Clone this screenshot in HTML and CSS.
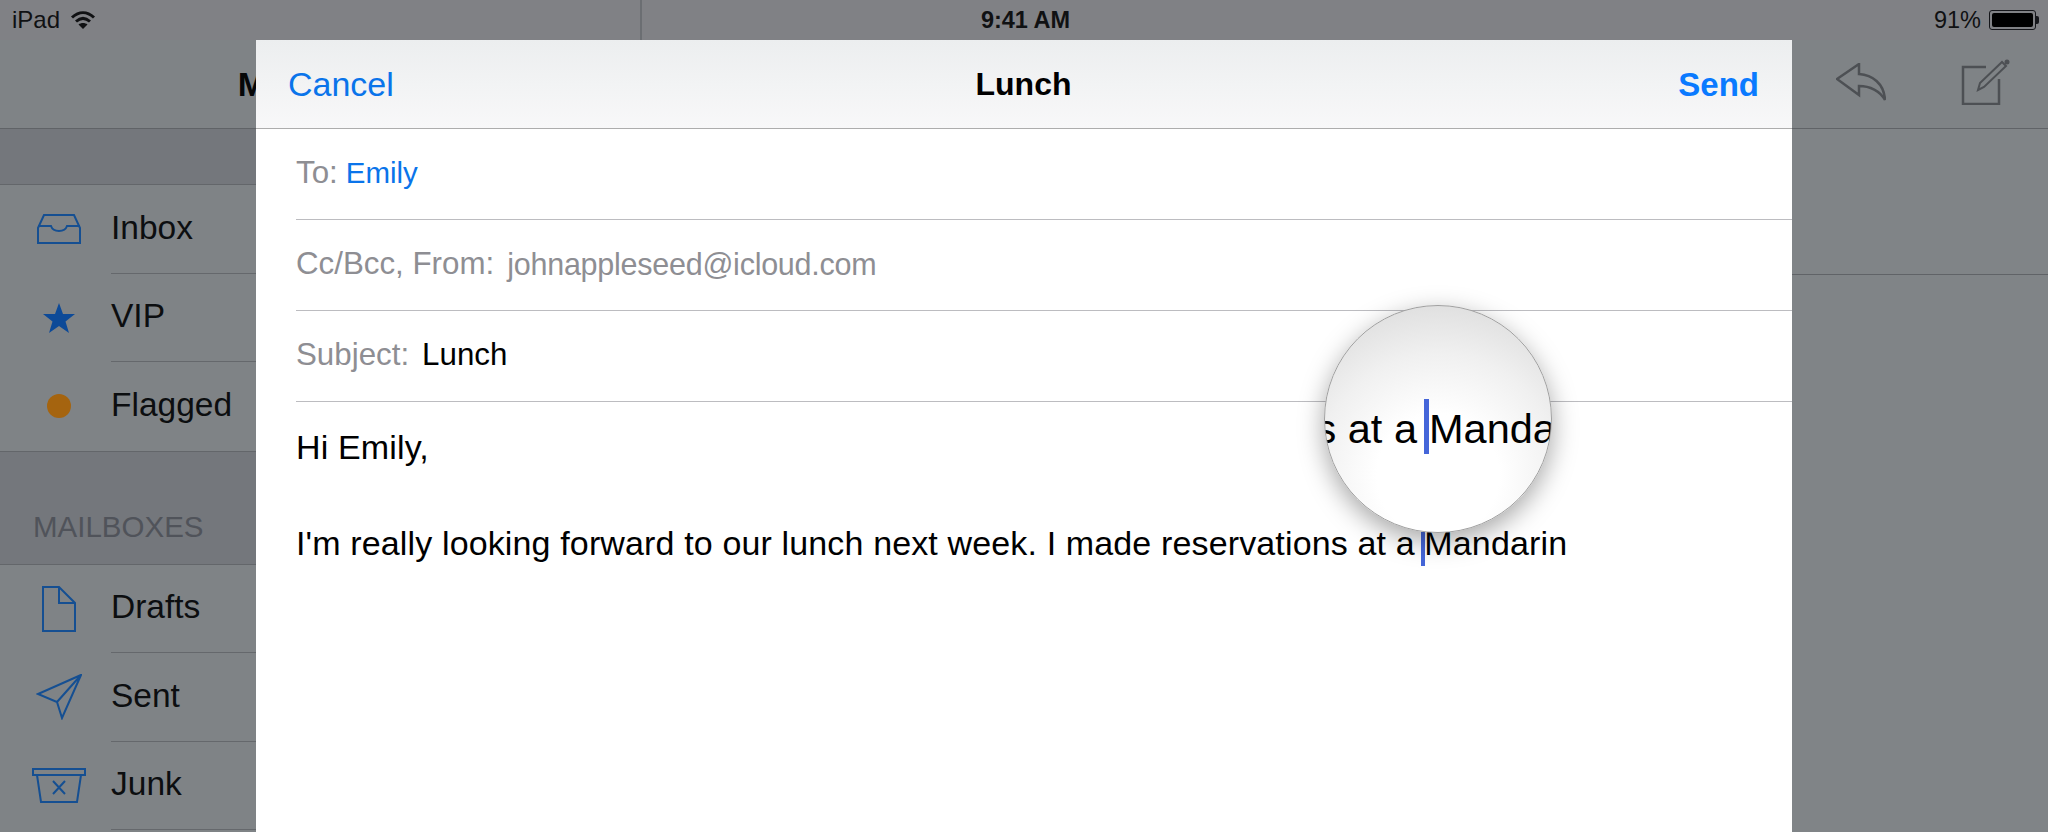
FILE: index.html
```html
<!DOCTYPE html>
<html lang="en">
<head>
<meta charset="utf-8">
<title>Lunch</title>
<link rel="stylesheet" href="styles.css">
</head>
<body>
<div class="screen">
  <aside class="sidebar">
    <div class="nav nav-left"><span class="nav-title">Mailboxes</span></div>
    <ul class="group group-top">
      <li class="row"><span class="icon"><svg width="46" height="32" viewBox="0 0 46 32"><path class="ln" d="M2 15 8 2H38L44 15V30H2ZM2 13H15C16 16 18 18 23 18S30 16 31 13H44"/></svg></span><span class="row-label">Inbox</span></li>
      <li class="row"><span class="icon"><svg width="34" height="32" viewBox="0 0 34 32"><polygon class="fl" points="17,1 21,12 33,12 23.500,19.500 27,31 17,24 7,31 10.500,19.500 1,12 13,12"/></svg></span><span class="row-label">VIP</span></li>
      <li class="row"><span class="icon"><span class="dot"></span></span><span class="row-label">Flagged</span></li>
    </ul>
    <h2 class="section-title">MAILBOXES</h2>
    <ul class="group">
      <li class="row"><span class="icon"><svg width="36" height="48" viewBox="0 0 36 48"><path class="ln" d="M2 2H18L34 18V46H2ZM18 2V18H34"/></svg></span><span class="row-label">Drafts</span></li>
      <li class="row"><span class="icon"><svg width="46" height="46" viewBox="0 0 46 46"><path class="ln" d="M45 1 2 20 21 28 26 44ZM45 1 21 28"/></svg></span><span class="row-label">Sent</span></li>
      <li class="row"><span class="icon"><svg width="54" height="38" viewBox="0 0 54 38"><path class="ln" d="M1 2H53V8H1ZM5 8 9 35H45L49 8M21 14 33 27M33 14 21 27"/></svg></span><span class="row-label">Junk</span></li>
      <li class="row"></li>
    </ul>
  </aside>
  <main class="detail">
    <div class="nav nav-right">
      <svg width="50" height="38" viewBox="0 0 50 38"><path class="ln-gray" d="M1 16 23 1V11C36 12 48 20 49 37 44 28 34 23 23 23V32Z"/></svg>
      <svg width="50" height="46" viewBox="0 0 50 46"><path class="ln-gray" d="M25 8H2V45H38V20"/><path class="ln-gray thin" d="M17 31 19 24 41 3 45 7 23 28Z"/><circle class="fl-gray" cx="46" cy="3" r="2.500"/></svg>
    </div>
    <div class="detail-head"></div>
  </main>
  <header class="status">
    <div class="status-left"><span>iPad</span><svg width="26" height="19" viewBox="0 0 26 19"><path class="wifi" d="M2 6.500C9 0 17 0 24 6.500M6 10.500C10.500 6.500 15.500 6.500 20 10.500"/><path class="wifi-fill" d="M13 18 8.500 13.500C11 11.500 15 11.500 17.500 13.500Z"/></svg></div>
    <div class="status-time">9:41 AM</div>
    <div class="status-right"><span>91%</span><span class="battery"><span class="battery-fill"></span></span><span class="battery-tip"></span></div>
  </header>
  <section class="modal">
    <div class="modal-head">
      <span class="link">Cancel</span>
      <span class="modal-title">Lunch</span>
      <span class="link send">Send</span>
    </div>
    <div class="field"><span class="label">To:</span><span class="link-small">Emily</span></div>
    <div class="field"><span class="label">Cc/Bcc, From:</span><span class="label email">johnappleseed@icloud.com</span></div>
    <div class="field"><span class="label">Subject:</span><span>Lunch</span></div>
    <div class="body">
      <p class="line">Hi Emily,</p>
      <p class="line blank"></p>
      <p class="line">I'm really looking forward to our lunch next week. I made reservations at a <span class="caret"></span>Mandarin</p>
    </div>
    <div class="loupe"><div class="loupe-text"><span class="loupe-left">reservations at a</span><span class="loupe-caret"></span><span class="loupe-right">Mandarin</span></div></div>
  </section>
</div>
</body>
</html>
```
FILE: styles.css
```css
* { box-sizing: border-box; }
html, body { margin: 0; padding: 0; }
body { width: 2048px; height: 832px; overflow: hidden; font-family: "Liberation Sans", Arial, sans-serif; color: #000; }
ul { list-style: none; margin: 0; padding: 0; }
p { margin: 0; }

.screen { position: relative; display: flex; width: 2048px; height: 832px; overflow: hidden; background: #7f8386; }
.sidebar { width: 642px; height: 832px; flex: none; background: linear-gradient(#808185 40px, #74777c 40px); border-right: 2px solid #6b6e72; padding-top: 40px; }
.detail { flex: 1; padding-top: 40px; background: linear-gradient(#808185 40px, #808487 40px); }

.status { position: absolute; left: 0; top: 0; width: 100%; height: 40px; display: grid; grid-template-columns: 1fr auto 1fr; align-items: center; padding: 0 9px 0 12px; font-size: 23.500px; color: #101113; }
.status-left { display: flex; align-items: center; gap: 10px; font-size: 24px; }
.status-time { font-weight: 700; }
.status-right { display: flex; align-items: center; justify-content: flex-end; }
.wifi { fill: none; stroke: #101113; stroke-width: 3; }
.wifi-fill { fill: #101113; }
.battery { width: 47px; height: 20px; margin-left: 8px; border: 1px solid #15161a; border-radius: 3px; padding: 2px; display: block; }
.battery-fill { display: block; height: 100%; width: 100%; background: #000; border-radius: 2px; }
.battery-tip { width: 3px; height: 8px; background: #15161a; border-radius: 0 2px 2px 0; }

.nav { height: 89px; background: #7f8386; border-bottom: 1px solid #606367; display: flex; align-items: center; }
.nav-left { justify-content: center; }
.nav-title { font-size: 34px; font-weight: 700; color: #060708; }
.nav-right { justify-content: flex-end; gap: 75px; padding-right: 37px; padding-bottom: 4px; }
.detail-head { height: 146px; border-bottom: 1px solid #606367; }

.group { background: #7f8386; border-top: 1px solid #63666a; }
.group-top { margin-top: 55px; border-bottom: 1px solid #63666a; }
.row { height: 88.500px; position: relative; display: flex; align-items: center; font-size: 33.500px; color: #0c0e10; }
.row + .row::before { content: ""; position: absolute; left: 111px; right: 0; top: -1px; height: 1px; background: #65686c; }
.icon { width: 111px; flex: none; display: flex; justify-content: center; padding-left: 6px; }
.icon svg { display: block; }
.row-label { padding-bottom: 3px; }
.dot { width: 24px; height: 24px; border-radius: 50%; background: #a5640f; display: block; }
.ln { fill: none; stroke: #154f92; stroke-width: 2; }
.fl { fill: #0d4a98; }
.ln-gray { fill: none; stroke: #4d5054; stroke-width: 2.500; }
.thin { stroke-width: 2; }
.fl-gray { fill: #4d5054; }
.section-title { margin: 0; height: 112px; padding: 58px 0 0 33px; font-size: 29.500px; line-height: 34px; font-weight: 400; color: #50535a; }

.modal { position: absolute; left: 256px; top: 40px; width: 1536px; height: 792px; background: #fff; overflow: hidden; }
.modal-head { height: 89px; display: grid; grid-template-columns: 1fr auto 1fr; align-items: center; padding: 1px 33px 0 32px; background: linear-gradient(#eceeef, #f8f8f9); border-bottom: 1px solid #adadad; font-size: 34px; }
.link { color: #0a74ea; }
.send { color: #0a7aff; font-weight: 700; justify-self: end; font-size: 33px; }
.modal-title { font-weight: 700; font-size: 32px; }
.field { height: 91px; margin-left: 40px; padding-bottom: 2px; border-bottom: 1px solid #bcbcc0; display: flex; align-items: center; gap: 13px; font-size: 31.300px; }
.label { color: #8e8e93; }
.link-small { color: #0a74ea; font-size: 29.500px; }
.field:nth-child(2) { gap: 8px; }
.email { font-size: 30.500px; letter-spacing: -.25px; }
.body { padding: 21px 0 0 40px; font-size: 34px; line-height: 48px; letter-spacing: .14px; }
.line { min-height: 48px; white-space: nowrap; }
.caret { position: relative; display: inline-block; width: 0; height: 0; }
.caret::after { content: ""; position: absolute; left: -3px; bottom: -11px; width: 4px; height: 34px; background: #4566d9; }

.loupe { position: absolute; left: 1068px; top: 265px; width: 228px; height: 228px; border-radius: 50%; overflow: hidden; border: 1px solid #a0a0a0; background: radial-gradient(circle at 50% 75%, #fff 30%, #f0f0f0 60%, #d5d5d5 100%); box-shadow: 0 8px 26px rgba(0,0,0,.35); }
.loupe-text { position: absolute; left: 0; top: 93px; height: 55px; display: flex; align-items: center; white-space: nowrap; font-size: 41.500px; line-height: 55px; }
.loupe-left { flex: none; width: 99px; padding: 3px 7px 0 0; display: flex; justify-content: flex-end; }
.loupe-right { padding-top: 3px; }
.loupe-caret { flex: none; width: 5px; height: 55px; background: #4566d9; }
```
